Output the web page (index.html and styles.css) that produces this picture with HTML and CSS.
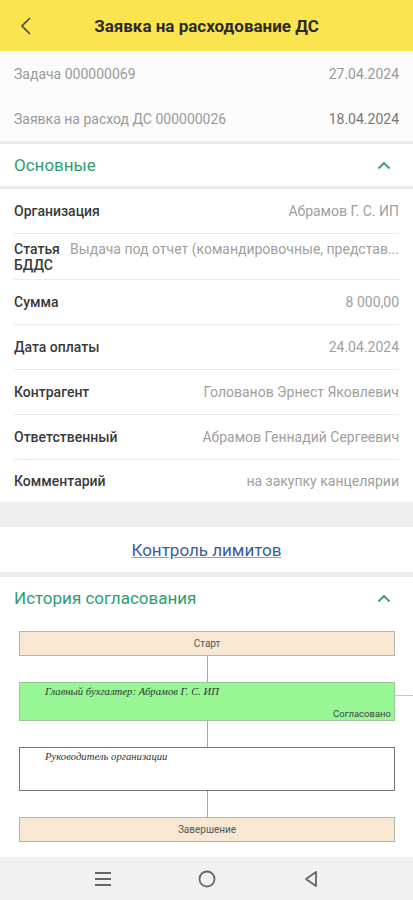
FILE: index.html
```html
<!DOCTYPE html>
<html lang="ru">
<head>
    <meta charset="UTF-8">
    <meta name="viewport" content="width=device-width, initial-scale=1.0">
    <title>Заявка на расходование ДС</title>
    <link rel="stylesheet" href="styles.css">
</head>
<body>
    <div class="screen">
        <div class="topbar">
            <svg class="back" width="12" height="20" viewBox="0 0 12 20"><path d="M10 2 L2 10 L10 18" fill="none" stroke="#444" stroke-width="1.6"/></svg>
            <div class="title">Заявка на расходование ДС</div>
        </div>

        <div class="links">
            <div class="link-row"><span>Задача 000000069</span><span>27.04.2024</span></div>
            <div class="link-row"><span>Заявка на расход ДС 000000026</span><span class="dark">18.04.2024</span></div>
        </div>

        <div class="divider"></div>
        <div class="section-head">
            <span>Основные</span>
            <svg width="14" height="9" viewBox="0 0 14 9"><path d="M1.5 7.5 L7 2 L12.5 7.5" fill="none" stroke="#2e9e6e" stroke-width="1.8"/></svg>
        </div>
        <div class="divider"></div>

        <div class="fields">
            <div class="field"><div class="label">Организация</div><div class="value">Абрамов Г. С. ИП</div></div>
            <div class="field tall"><div class="label">Статья<br>БДДС</div><div class="value clip">Выдача под отчет (командировочные, представ...</div></div>
            <div class="field"><div class="label">Сумма</div><div class="value">8 000,00</div></div>
            <div class="field"><div class="label">Дата оплаты</div><div class="value">24.04.2024</div></div>
            <div class="field"><div class="label">Контрагент</div><div class="value">Голованов Эрнест Яковлевич</div></div>
            <div class="field"><div class="label">Ответственный</div><div class="value">Абрамов Геннадий Сергеевич</div></div>
            <div class="field"><div class="label">Комментарий</div><div class="value">на закупку канцелярии</div></div>
        </div>

        <div class="band"></div>
        <div class="limits"><a href="#">Контроль лимитов</a></div>
        <div class="divider thin"></div>

        <div class="section-head">
            <span>История согласования</span>
            <svg width="14" height="9" viewBox="0 0 14 9"><path d="M1.5 7.5 L7 2 L12.5 7.5" fill="none" stroke="#2e9e6e" stroke-width="1.8"/></svg>
        </div>

        <div class="chart">
            <div class="node point">Старт</div>
            <div class="link"></div>
            <div class="node step done">
                <div class="who">Главный бухгалтер: Абрамов Г. С. ИП</div>
                <div class="state">Согласовано</div>
            </div>
            <div class="link"></div>
            <div class="node step">
                <div class="who">Руководитель организации</div>
            </div>
            <div class="link"></div>
            <div class="node point">Завершение</div>
        </div>

        <div class="navbar">
            <div class="nav-btn"><svg width="18" height="16" viewBox="0 0 18 16"><path d="M1 2 H17 M1 8 H17 M1 14 H17" stroke="#666" stroke-width="1.8"/></svg></div>
            <div class="nav-btn"><svg width="20" height="20" viewBox="0 0 20 20"><circle cx="10" cy="10" r="7.5" fill="none" stroke="#666" stroke-width="1.8"/></svg></div>
            <div class="nav-btn"><svg width="16" height="18" viewBox="0 0 16 18"><path d="M13 2 L3 9 L13 16 Z" fill="none" stroke="#666" stroke-width="1.8" stroke-linejoin="round"/></svg></div>
        </div>
    </div>
</body>
</html>
```

FILE: styles.css
```css
body {
    margin: 0;
    font-family: Roboto, 'Noto Sans', sans-serif;
    background-color: #fff;
}
.screen {
    width: 413px;
    height: 900px;
    display: flex;
    flex-direction: column;
    overflow: hidden;
}
.topbar {
    height: 51px;
    flex-shrink: 0;
    background-color: #fae44f;
    display: flex;
    align-items: center;
    position: relative;
}
.topbar .back {
    margin-left: 20px;
}
.topbar .title {
    position: absolute;
    left: 0;
    right: 0;
    text-align: center;
    font-size: 17px;
    font-weight: bold;
    color: #2b2b2b;
    pointer-events: none;
}
.links {
    background-color: #fcfcfc;
}
.link-row {
    height: 45px;
    padding: 0 14px;
    display: flex;
    justify-content: space-between;
    align-items: center;
    font-size: 14px;
    color: #9a9a9a;
}
.link-row .dark {
    color: #777;
}
.divider {
    height: 3px;
    background-color: #ececec;
    flex-shrink: 0;
}
.divider.thin {
    height: 5px;
}
.section-head {
    height: 42px;
    flex-shrink: 0;
    padding: 0 22px 0 14px;
    display: flex;
    justify-content: space-between;
    align-items: center;
    font-size: 17px;
    color: #2e9e6e;
}
.fields {
    padding: 0 14px;
}
.field {
    min-height: 44px;
    display: flex;
    align-items: center;
    gap: 10px;
    font-size: 14px;
    border-bottom: 1px solid #ebebeb;
}
.field:last-child {
    border-bottom: none;
    min-height: 42px;
}
.field.tall {
    min-height: 46px;
    align-items: flex-start;
    padding-top: 7px;
    box-sizing: border-box;
}
.field .label {
    font-weight: 500;
    color: #3a3a3a;
    line-height: 16px;
    flex-shrink: 0;
}
.field .value {
    flex: 1;
    text-align: right;
    color: #a0a0a0;
    white-space: nowrap;
}
.field .value.clip {
    line-height: 16px;
}
.band {
    height: 25px;
    background-color: #efefef;
}
.limits {
    height: 45px;
    display: flex;
    justify-content: center;
    align-items: center;
}
.limits a {
    font-size: 17px;
    color: #3b5c9c;
    text-decoration: underline;
    text-decoration-color: #8aa0c8;
}
.chart {
    flex: 1;
    padding: 12px 18px 0 19px;
    display: flex;
    flex-direction: column;
    align-items: stretch;
}
.node {
    box-sizing: border-box;
    border: 1px solid #b4b4b4;
    position: relative;
}
.node.point {
    height: 25px;
    background-color: #f8e8d3;
    display: flex;
    justify-content: center;
    align-items: center;
    font-size: 10px;
    color: #555;
}
.node.step {
    height: 44px;
    background-color: #fff;
    border-color: #777;
}
.node.step.done {
    height: 39px;
    background-color: #98f795;
    border-color: #9bc79a;
}
.node.done::after {
    content: '';
    position: absolute;
    left: 100%;
    top: 12px;
    width: 30px;
    border-top: 1px solid #c8c8c8;
}
.node .who {
    margin: 2px 0 0 25px;
    font-family: 'Liberation Serif', serif;
    font-style: italic;
    font-size: 10.7px;
    color: #333;
}
.node .state {
    position: absolute;
    right: 3px;
    bottom: 1px;
    font-size: 9.5px;
    color: #444;
}
.link {
    width: 1px;
    height: 26px;
    margin: 0 auto;
    background-color: #a8a8a8;
}
.navbar {
    height: 43px;
    flex-shrink: 0;
    margin-top: auto;
    background-color: #f1f1f1;
    display: flex;
    justify-content: center;
    align-items: center;
    gap: 64px;
}
.nav-btn {
    width: 40px;
    display: flex;
    justify-content: center;
}
```
